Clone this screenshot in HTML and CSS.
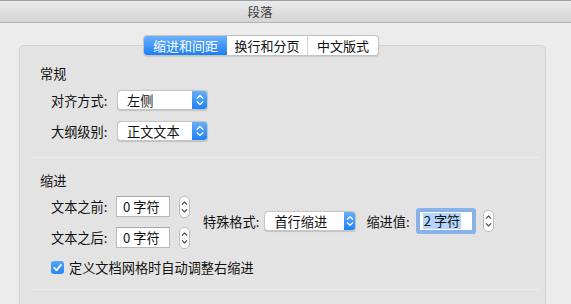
FILE: index.html
```html
<!DOCTYPE html>
<html lang="zh-CN">

<head>
  <meta charset="UTF-8" />
  <title>段落</title>
  <link rel="stylesheet" href="styles.css">
</head>

<body>
  <!-- Title bar -->
  <div class="titlebar">
    <span>段落</span>
  </div>

  <!-- Tabs -->
  <div class="tabs">
    <div class="tab active tab-1">缩进和间距</div>
    <div class="tab tab-2">换行和分页</div>
    <div class="tab tab-3">中文版式</div>
  </div>

  <!-- Panel -->
  <div class="panel">
    <div class="section general">
      <h3>常规</h3>
      <div class="row">
        <label>对齐方式:</label>
        <div class="popup">
          <span>左侧</span>
          <div class="popup-arrow">
            <svg width="16" height="20" viewBox="0 0 16 20"><path d="M5.2 8.2 L8 5.4 L10.8 8.2 M5.2 11.8 L8 14.6 L10.8 11.8" fill="none" stroke="#fff" stroke-width="1.3" stroke-linecap="round" stroke-linejoin="round"/></svg>
          </div>
        </div>
      </div>
      <div class="row">
        <label>大纲级别:</label>
        <div class="popup">
          <span>正文文本</span>
          <div class="popup-arrow">
            <svg width="16" height="20" viewBox="0 0 16 20"><path d="M5.2 8.2 L8 5.4 L10.8 8.2 M5.2 11.8 L8 14.6 L10.8 11.8" fill="none" stroke="#fff" stroke-width="1.3" stroke-linecap="round" stroke-linejoin="round"/></svg>
          </div>
        </div>
      </div>
    </div>

    <div class="divider"></div>

    <div class="section indent">
      <h3>缩进</h3>
      <div class="indent-grid">
        <div class="indent-left">
          <div class="row">
            <label>文本之前:</label>
            <div class="field">0 字符</div>
            <div class="stepper">
              <svg width="11" height="22" viewBox="0 0 11 22"><path d="M3.2 8.4 L5.5 6 L7.8 8.4 M3.2 13.6 L5.5 16 L7.8 13.6" fill="none" stroke="#4a4a4a" stroke-width="1.1" stroke-linecap="round" stroke-linejoin="round"/></svg>
            </div>
          </div>
          <div class="row">
            <label>文本之后:</label>
            <div class="field">0 字符</div>
            <div class="stepper">
              <svg width="11" height="22" viewBox="0 0 11 22"><path d="M3.2 8.4 L5.5 6 L7.8 8.4 M3.2 13.6 L5.5 16 L7.8 13.6" fill="none" stroke="#4a4a4a" stroke-width="1.1" stroke-linecap="round" stroke-linejoin="round"/></svg>
            </div>
          </div>
        </div>
        <div class="indent-right">
          <label>特殊格式:</label>
          <div class="popup popup-special">
            <span>首行缩进</span>
            <div class="popup-arrow">
              <svg width="12" height="20" viewBox="0 0 12 20"><path d="M3.4 8.2 L6 5.6 L8.6 8.2 M3.4 11.8 L6 14.4 L8.6 11.8" fill="none" stroke="#fff" stroke-width="1.3" stroke-linecap="round" stroke-linejoin="round"/></svg>
            </div>
          </div>
          <label class="value-label">缩进值:</label>
          <div class="field focused"><span class="selected">2 字符</span></div>
          <div class="stepper">
            <svg width="11" height="22" viewBox="0 0 11 22"><path d="M3.2 8.4 L5.5 6 L7.8 8.4 M3.2 13.6 L5.5 16 L7.8 13.6" fill="none" stroke="#4a4a4a" stroke-width="1.1" stroke-linecap="round" stroke-linejoin="round"/></svg>
          </div>
        </div>
      </div>
      <div class="check-row">
        <div class="checkbox">
          <svg width="13" height="13" viewBox="0 0 13 13"><path d="M3.2 6.9 L5.5 9.2 L9.9 3.9" fill="none" stroke="#fff" stroke-width="1.8" stroke-linecap="round" stroke-linejoin="round"/></svg>
        </div>
        <span>定义文档网格时自动调整右缩进</span>
      </div>
    </div>

    <div class="divider"></div>
  </div>
</body>

</html>
```

FILE: styles.css
```css
* {
  box-sizing: border-box;
  margin: 0;
  padding: 0;
}

body {
  font-family: "Noto Sans CJK SC", "Liberation Sans", sans-serif;
  font-size: 13.2px;
  color: #111;
  background-color: #ececec;
  height: 304px;
  overflow: hidden;
}

/* Title bar */
.titlebar {
  height: 23px;
  display: flex;
  align-items: center;
  justify-content: center;
  padding-right: 51px;
  font-size: 12.5px;
  color: #3a3a3a;
  background: linear-gradient(#ebebeb, #d4d4d4);
  border-top: 1px solid #9aa0aa;
  border-bottom: 1px solid #b4b4b4;
}

/* Tabs */
.tabs {
  position: relative;
  z-index: 1;
  display: flex;
  width: 236px;
  height: 21px;
  margin: 12px 0 -11px 143px;
  background-color: #fff;
  border: 1px solid #c3c3c3;
  border-radius: 4px;
  box-shadow: 0 0.5px 1px rgba(0, 0, 0, 0.12);
  overflow: hidden;
}

.tab {
  display: flex;
  align-items: center;
  justify-content: center;
  font-size: 13px;
  color: #111;
}

.tab-1 {
  width: 83px;
}

.tab-2 {
  width: 80px;
}

.tab-3 {
  width: 71px;
  border-left: 1px solid #d6d6d6;
}

.tab.active {
  color: #fff;
  background: linear-gradient(#6bb0fa, #1a7ff5);
}

/* Panel */
.panel {
  width: 527px;
  height: 270px;
  margin-left: 19px;
  background-color: #e3e3e3;
  border: 1px solid #d3d3d3;
  border-radius: 5px;
}

.section {
  padding-left: 20px;
  display: flex;
  flex-direction: column;
}

.section h3 {
  font-size: 13.2px;
  font-weight: normal;
  line-height: 16px;
}

.general {
  padding-top: 20px;
  padding-bottom: 16px;
  gap: 8px;
}

.general .row + .row {
  margin-top: 3px;
}

.indent {
  padding-top: 15px;
  padding-bottom: 15px;
}

.divider {
  height: 1px;
  margin: 0 6px 0 12px;
  background-color: #cdcdcd;
  border-bottom: 1px solid #ececec;
}

.row {
  display: flex;
  align-items: center;
  padding-left: 11px;
  height: 20px;
}

label {
  white-space: nowrap;
}

.row label {
  width: 66px;
}

/* Popup button */
.popup {
  display: flex;
  align-items: center;
  justify-content: space-between;
  width: 91px;
  height: 20px;
  padding-left: 9px;
  background-color: #fff;
  border: 1px solid #c6c6c6;
  border-radius: 4px;
  box-shadow: 0 0.5px 1px rgba(0, 0, 0, 0.15);
  overflow: hidden;
}

.popup-arrow {
  display: flex;
  align-items: center;
  justify-content: center;
  width: 16px;
  height: 20px;
  margin-right: -1px;
  background: linear-gradient(#6bb0fa, #1a7ff5);
}

.popup-special {
  width: 92px;
  margin-left: 5px;
}

.popup-special .popup-arrow {
  width: 12px;
}

/* Indent controls */
.indent-grid {
  display: flex;
  align-items: center;
  margin-top: 7px;
}

.indent-left {
  display: flex;
  flex-direction: column;
  gap: 10px;
}

.indent-left .row {
  height: 21px;
}

.indent-left .row label {
  width: 65px;
}

.field {
  display: flex;
  align-items: center;
  width: 54px;
  height: 21px;
  padding-left: 6px;
  background-color: #fff;
  border: 1px solid #b8b8b8;
  border-top-color: #a8a8a8;
}

.stepper {
  display: flex;
  width: 11px;
  height: 22px;
  margin-left: 9px;
  background-color: #fff;
  border: 1px solid #bdbdbd;
  border-radius: 5px;
  overflow: hidden;
}

.stepper svg {
  margin: -1px;
}

.indent-right {
  display: flex;
  align-items: center;
  margin-left: 13px;
  margin-top: -2px;
}

.value-label {
  margin-left: 10px;
  margin-right: 9px;
}

.field.focused {
  height: 20px;
  padding-left: 3px;
  border-color: #8aaee0;
  box-shadow: 0 0 0 3px #88b2ea;
  border-radius: 1px;
}

.selected {
  background-color: #b4d5fe;
  padding: 0 1px;
  line-height: 16px;
}

.indent-right .stepper {
  margin-left: 10px;
}

/* Checkbox */
.check-row {
  display: flex;
  align-items: center;
  gap: 5px;
  margin-top: 12px;
  padding-left: 11px;
  height: 14px;
}

.checkbox {
  display: flex;
  width: 13px;
  height: 13px;
  background: linear-gradient(#58a6fb, #2484f6);
  border-radius: 3px;
}
```
